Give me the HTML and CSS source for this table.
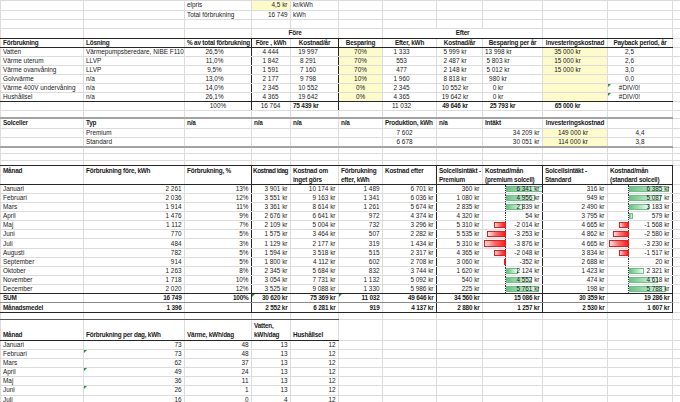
FILE: index.html
```html
<!DOCTYPE html>
<html lang="sv">
<head>
<meta charset="utf-8">
<title>Energikalkyl</title>
<link rel="stylesheet" href="styles.css">
</head>
<body>
<table class="sheet">
<colgroup>
<col class="wa"><col class="wb"><col class="wc"><col class="wd"><col class="we"><col class="wf"><col class="wg"><col class="wh"><col class="wi"><col class="wj"><col class="wk"><col class="wl">
</colgroup>
<tbody>
<tr class="h95"><td></td><td></td><td>elpris</td><td class="y r">4,5 kr</td><td>kr/kWh</td><td></td><td></td><td></td><td></td><td></td><td></td><td></td></tr>
<tr class="h95"><td></td><td></td><td>Total förbrukning</td><td class="r">16 749</td><td>kWh</td><td></td><td></td><td></td><td></td><td></td><td></td><td></td></tr>
<tr class="h9"><td></td><td></td><td></td><td></td><td></td><td></td><td></td><td></td><td></td><td></td><td></td><td></td></tr>
<tr class="h95 bd"><td></td><td></td><td></td><td colspan="2" class="b c">Före</td><td></td><td colspan="3" class="b c">Efter</td><td></td><td></td><td class="nb"></td></tr>
<tr class="h95 bd"><td class="b">Förbrukning</td><td class="b">Lösning</td><td class="b vr">% av total förbrukning</td><td class="b c">Före , kWh</td><td class="b c vr">Kostnad/år</td><td class="b c">Besparing</td><td class="b c">Efter, kWh</td><td class="b c">Kostnad/år</td><td class="b c">Besparing per år</td><td class="b c">Investeringskostnad</td><td class="b c">Payback period, år</td><td class="nb"></td></tr>
<tr class="h9"><td>Vatten</td><td>Värmepumpsberedare, NIBE F110</td><td class="c cC vr">26,5%</td><td class="c cD">4 444</td><td class="c cE vr">19 997</td><td class="y c">70%</td><td class="c cG">1 333</td><td class="c cH">5 999 kr</td><td class="c cI">13 998 kr</td><td class="y c cJ">35 000 kr</td><td class="c cK">2,5</td><td></td></tr>
<tr class="h9"><td>Värme uterum</td><td>LLVP</td><td class="c cC vr">11,0%</td><td class="c cD">1 842</td><td class="c cE vr">8 291</td><td class="y c">70%</td><td class="c cG">553</td><td class="c cH">2 487 kr</td><td class="c cI">5 803 kr</td><td class="y c cJ">15 000 kr</td><td class="c cK">2,6</td><td></td></tr>
<tr class="h9"><td>Värme ovanvåning</td><td>LLVP</td><td class="c cC vr">9,5%</td><td class="c cD">1 591</td><td class="c cE vr">7 160</td><td class="y c">70%</td><td class="c cG">477</td><td class="c cH">2 148 kr</td><td class="c cI">5 012 kr</td><td class="y c cJ">15 000 kr</td><td class="c cK">3,0</td><td></td></tr>
<tr class="h9"><td>Golvvärme</td><td>n/a</td><td class="c cC vr">13,0%</td><td class="c cD">2 177</td><td class="c cE vr">9 798</td><td class="y c">10%</td><td class="c cG">1 960</td><td class="c cH">8 818 kr</td><td class="c cI">980 kr</td><td class="y"></td><td class="c cK">0,0</td><td></td></tr>
<tr class="h9"><td>Värme 400V undervåning</td><td>n/a</td><td class="c cC vr">14,0%</td><td class="c cD">2 345</td><td class="c cE vr">10 552</td><td class="y c">0%</td><td class="c cG">2 345</td><td class="c cH">10 552 kr</td><td class="c cI">0 kr</td><td class="y"></td><td class="c cK tri">#DIV/0!</td><td></td></tr>
<tr class="h9 bd"><td>Hushållsel</td><td>n/a</td><td class="c cC vr">26,1%</td><td class="c cD">4 365</td><td class="c cE vr">19 642</td><td class="y c">0%</td><td class="c cG">4 365</td><td class="c cH">19 642 kr</td><td class="c cI">0 kr</td><td class="y"></td><td class="c cK tri">#DIV/0!</td><td class="nb"></td></tr>
<tr class="h9"><td></td><td></td><td class="c vr">100%</td><td class="c cD">16 764</td><td class="b c cEt vr">75 439 kr</td><td></td><td class="c cG">11 032</td><td class="b c cH">49 646 kr</td><td class="b c cIt">25 793 kr</td><td class="b c cJ">65 000 kr</td><td></td><td></td></tr>
<tr class="h75 bg"><td></td><td></td><td></td><td></td><td></td><td></td><td></td><td></td><td></td><td></td><td></td><td class="nb"></td></tr>
<tr class="h10"><td class="b">Solceller</td><td class="b">Typ</td><td class="b">n/a</td><td class="b">n/a</td><td class="b">n/a</td><td class="b">n/a</td><td class="b">Produktion, kWh</td><td class="b">n/a</td><td class="b">Intäkt</td><td class="b c">Investeringskostnad</td><td></td><td></td></tr>
<tr class="h95"><td></td><td>Premium</td><td></td><td></td><td></td><td></td><td class="c cGs">7 602</td><td></td><td class="r">34 209 kr</td><td class="y c cJs">149 000 kr</td><td class="c">4,4</td><td></td></tr>
<tr class="h9 bg"><td></td><td>Standard</td><td></td><td></td><td></td><td></td><td class="c cGs">6 678</td><td></td><td class="r">30 051 kr</td><td class="y c cJs">114 000 kr</td><td class="c">3,8</td><td class="nb"></td></tr>
<tr class="h65"><td></td><td></td><td></td><td></td><td></td><td></td><td></td><td></td><td></td><td></td><td></td><td></td></tr>
<tr class="h7"><td></td><td></td><td></td><td></td><td></td><td></td><td></td><td></td><td></td><td></td><td></td><td></td></tr>
<tr class="h5 bd"><td></td><td></td><td></td><td></td><td></td><td></td><td></td><td></td><td></td><td></td><td></td><td class="nb"></td></tr>
<tr class="h17 bd hd"><td class="b">Månad</td><td class="b">Förbrukning före, kWh</td><td class="b vr">Förbrukning, %</td><td class="b tight">Kostnad idag</td><td class="b">Kostnad om<br>inget görs</td><td class="b">Förbrukning<br>efter, kWh</td><td class="b vr">Kostnad efter</td><td class="b">Solcellsintäkt -<br>Premium</td><td class="b vr">Kostnad/mån<br>(premium solcell)</td><td class="b">Solcellsintäkt -<br>Standard</td><td class="b vr">Kostnad/mån<br>(standard solcell)</td><td class="nb"></td></tr>
<tr class="hm"><td>Januari</td><td class="r">2 261</td><td class="r vr">13%</td><td class="r">3 901 kr</td><td class="r">10 174 kr</td><td class="r">1 489</td><td class="r vr">6 701 kr</td><td class="r">360 kr</td><td class="r vr bar"><i class="ax p"></i><i class="pos p" style="width:36.8px"></i><span>6 341 kr</span></td><td class="r">316 kr</td><td class="r vr bar"><i class="ax s"></i><i class="pos s" style="width:40.2px"></i><span>6 385 kr</span></td><td></td></tr>
<tr class="hm"><td>Februari</td><td class="r">2 036</td><td class="r vr">12%</td><td class="r">3 551 kr</td><td class="r">9 163 kr</td><td class="r">1 341</td><td class="r vr">6 036 kr</td><td class="r">1 080 kr</td><td class="r vr bar"><i class="ax p"></i><i class="pos p" style="width:28.7px"></i><span>4 956 kr</span></td><td class="r">949 kr</td><td class="r vr bar"><i class="ax s"></i><i class="pos s" style="width:32px"></i><span>5 087 kr</span></td><td></td></tr>
<tr class="hm"><td>Mars</td><td class="r">1 914</td><td class="r vr">11%</td><td class="r">3 361 kr</td><td class="r">8 614 kr</td><td class="r">1 261</td><td class="r vr">5 674 kr</td><td class="r">2 835 kr</td><td class="r vr bar"><i class="ax p"></i><i class="pos p" style="width:16.5px"></i><span>2 839 kr</span></td><td class="r">2 490 kr</td><td class="r vr bar"><i class="ax s"></i><i class="pos s" style="width:20.1px"></i><span>3 183 kr</span></td><td></td></tr>
<tr class="hm"><td>April</td><td class="r">1 476</td><td class="r vr">9%</td><td class="r">2 676 kr</td><td class="r">6 641 kr</td><td class="r">972</td><td class="r vr">4 374 kr</td><td class="r">4 320 kr</td><td class="r vr bar"><i class="ax p"></i><span>54 kr</span></td><td class="r">3 795 kr</td><td class="r vr bar"><i class="ax s"></i><i class="pos s" style="width:3.6px"></i><span>579 kr</span></td><td></td></tr>
<tr class="hm"><td>Maj</td><td class="r">1 112</td><td class="r vr">7%</td><td class="r">2 109 kr</td><td class="r">5 004 kr</td><td class="r">732</td><td class="r vr">3 296 kr</td><td class="r">5 310 kr</td><td class="r vr bar"><i class="ax p"></i><i class="neg p" style="width:11.7px"></i><span>-2 014 kr</span></td><td class="r">4 665 kr</td><td class="r vr bar"><i class="ax s"></i><i class="neg s" style="width:9.9px"></i><span>-1 568 kr</span></td><td></td></tr>
<tr class="hm"><td>Juni</td><td class="r">770</td><td class="r vr">5%</td><td class="r">1 575 kr</td><td class="r">3 464 kr</td><td class="r">507</td><td class="r vr">2 282 kr</td><td class="r">5 535 kr</td><td class="r vr bar"><i class="ax p"></i><i class="neg p" style="width:18.9px"></i><span>-3 253 kr</span></td><td class="r">4 862 kr</td><td class="r vr bar"><i class="ax s"></i><i class="neg s" style="width:16.3px"></i><span>-2 580 kr</span></td><td></td></tr>
<tr class="hm"><td>Juli</td><td class="r">484</td><td class="r vr">3%</td><td class="r">1 129 kr</td><td class="r">2 177 kr</td><td class="r">319</td><td class="r vr">1 434 kr</td><td class="r">5 310 kr</td><td class="r vr bar"><i class="ax p"></i><i class="neg p" style="width:22.5px"></i><span>-3 876 kr</span></td><td class="r">4 665 kr</td><td class="r vr bar"><i class="ax s"></i><i class="neg s" style="width:20.3px"></i><span>-3 230 kr</span></td><td></td></tr>
<tr class="hm"><td>Augusti</td><td class="r">782</td><td class="r vr">5%</td><td class="r">1 594 kr</td><td class="r">3 518 kr</td><td class="r">515</td><td class="r vr">2 317 kr</td><td class="r">4 365 kr</td><td class="r vr bar"><i class="ax p"></i><i class="neg p" style="width:11.9px"></i><span>-2 048 kr</span></td><td class="r">3 834 kr</td><td class="r vr bar"><i class="ax s"></i><i class="neg s" style="width:9.6px"></i><span>-1 517 kr</span></td><td></td></tr>
<tr class="hm"><td>September</td><td class="r">914</td><td class="r vr">5%</td><td class="r">1 800 kr</td><td class="r">4 112 kr</td><td class="r">602</td><td class="r vr">2 708 kr</td><td class="r">3 060 kr</td><td class="r vr bar"><i class="ax p"></i><i class="neg p" style="width:2px"></i><span>-352 kr</span></td><td class="r">2 688 kr</td><td class="r vr bar"><i class="ax s"></i><span>20 kr</span></td><td></td></tr>
<tr class="hm"><td>Oktober</td><td class="r">1 263</td><td class="r vr">8%</td><td class="r">2 345 kr</td><td class="r">5 684 kr</td><td class="r">832</td><td class="r vr">3 744 kr</td><td class="r">1 620 kr</td><td class="r vr bar"><i class="ax p"></i><i class="pos p" style="width:12.3px"></i><span>2 124 kr</span></td><td class="r">1 423 kr</td><td class="r vr bar"><i class="ax s"></i><i class="pos s" style="width:14.6px"></i><span>2 321 kr</span></td><td></td></tr>
<tr class="hm"><td>November</td><td class="r">1 718</td><td class="r vr">10%</td><td class="r">3 054 kr</td><td class="r">7 731 kr</td><td class="r">1 132</td><td class="r vr">5 092 kr</td><td class="r">540 kr</td><td class="r vr bar"><i class="ax p"></i><i class="pos p" style="width:26.4px"></i><span>4 552 kr</span></td><td class="r">474 kr</td><td class="r vr bar"><i class="ax s"></i><i class="pos s" style="width:29.1px"></i><span>4 618 kr</span></td><td></td></tr>
<tr class="hm bd"><td>December</td><td class="r">2 020</td><td class="r vr">12%</td><td class="r">3 525 kr</td><td class="r">9 088 kr</td><td class="r">1 330</td><td class="r vr">5 986 kr</td><td class="r">225 kr</td><td class="r vr bar"><i class="ax p"></i><i class="pos p" style="width:33.4px"></i><span>5 761 kr</span></td><td class="r">198 kr</td><td class="r vr bar"><i class="ax s"></i><i class="pos s" style="width:36.5px"></i><span>5 788 kr</span></td><td class="nb"></td></tr>
<tr class="h9 bm b"><td>SUM</td><td class="r">16 749</td><td class="r vr">100%</td><td class="r tri">30 620 kr</td><td class="r">75 369 kr</td><td class="r tri">11 032</td><td class="r vr">49 646 kr</td><td class="r">34 560 kr</td><td class="r vr">15 086 kr</td><td class="r">30 359 kr</td><td class="r vr">19 286 kr</td><td class="nb"></td></tr>
<tr class="h105 bd b"><td>Månadsmedel</td><td class="r">1 396</td><td class="r vr"></td><td class="r">2 552 kr</td><td class="r">6 281 kr</td><td class="r">919</td><td class="r vr">4 137 kr</td><td class="r">2 880 kr</td><td class="r vr">1 257 kr</td><td class="r">2 530 kr</td><td class="r vr">1 607 kr</td><td class="nb"></td></tr>
<tr class="h65"><td class="bh"></td><td class="bh"></td><td class="bh"></td><td class="bh"></td><td class="bh"></td><td></td><td></td><td></td><td></td><td></td><td></td><td></td></tr>
<tr class="h21 hb b"><td class="bk">Månad</td><td class="bk">Förbrukning per dag, kWh</td><td class="bk">Värme, kWh/dag</td><td class="bk">Vatten,<br>kWh/dag</td><td class="bk">Hushållsel</td><td></td><td></td><td></td><td></td><td></td><td></td><td></td></tr>
<tr class="h91"><td>Januari</td><td class="r">73</td><td class="r">48</td><td class="r">13</td><td class="r">12</td><td></td><td></td><td></td><td></td><td></td><td></td><td></td></tr>
<tr class="h91"><td>Februari</td><td class="r tri">73</td><td class="r">48</td><td class="r">13</td><td class="r">12</td><td></td><td></td><td></td><td></td><td></td><td></td><td></td></tr>
<tr class="h91"><td>Mars</td><td class="r">62</td><td class="r">37</td><td class="r">13</td><td class="r">12</td><td></td><td></td><td></td><td></td><td></td><td></td><td></td></tr>
<tr class="h91"><td>April</td><td class="r tri">49</td><td class="r">24</td><td class="r">13</td><td class="r">12</td><td></td><td></td><td></td><td></td><td></td><td></td><td></td></tr>
<tr class="h91"><td>Maj</td><td class="r">36</td><td class="r">11</td><td class="r">13</td><td class="r">12</td><td></td><td></td><td></td><td></td><td></td><td></td><td></td></tr>
<tr class="h91"><td>Juni</td><td class="r tri">26</td><td class="r">1</td><td class="r">13</td><td class="r">12</td><td></td><td></td><td></td><td></td><td></td><td></td><td></td></tr>
<tr class="h91"><td>Juli</td><td class="r">16</td><td class="r">0</td><td class="r">4</td><td class="r">12</td><td></td><td></td><td></td><td></td><td></td><td></td><td></td></tr>
</tbody>
</table>
</body>
</html>
```

FILE: styles.css
```css
html, body {
  margin: 0;
  padding: 0;
  background: #ffffff;
}
body {
  font-family: "Liberation Sans", Arial, sans-serif;
  font-size: 6.4px;
  color: #1a1a1a;
  overflow: hidden;
}
.sheet {
  border-collapse: collapse;
  table-layout: fixed;
  width: 680px;
}
.wa { width: 83px; }
.wb { width: 101px; }
.wc { width: 67px; }
.wd { width: 39px; }
.we { width: 48px; }
.wf { width: 44px; }
.wg { width: 54px; }
.wh { width: 46px; }
.wi { width: 60px; }
.wj { width: 65px; }
.wk { width: 65px; }
.wl { width: 8px; }

.sheet td {
  border: 1px solid #dcdcdc;
  padding: 0 2px;
  line-height: 8px;
  white-space: nowrap;
  overflow: hidden;
  vertical-align: middle;
  text-align: left;
}

/* row heights */
.h5 { height: 5px; }
.h65 { height: 6.5px; }
.h7 { height: 7px; }
.h75 { height: 7.5px; }
.h9 { height: 9px; }
.h95 { height: 9.5px; }
.h10 { height: 10px; }
.h105 { height: 10.5px; }
.h17 { height: 17px; }
.h21 { height: 21px; }
.hm { height: 9.08px; }
.h91 { height: 9.1px; }

/* borders */
.bd td { border-bottom: 1px solid #262626; }
.bd td.nb { border-bottom-color: #dcdcdc; }
.bg td { border-bottom: 2px solid #a3a3a3; }
.bg td.nb { border-bottom: 1px solid #dcdcdc; }
.bm td { border-bottom: 1px solid #8a8a8a; }
.bm td.nb { border-bottom-color: #dcdcdc; }
.sheet td.vr { border-right: 1px solid #262626; }
.sheet td.bh { border-bottom: 1px solid #555555; }
.sheet td.bk { border-bottom: 1px solid #262626; }

/* header rows */
.hd td { vertical-align: top; padding-top: 1px; line-height: 8.5px; }
.hb td { vertical-align: bottom; line-height: 9.5px; }

/* text */
.b, .b td { font-weight: bold; letter-spacing: -0.2px; }
.sheet td.tight { letter-spacing: -0.45px; padding-left: 1px; padding-right: 0; }
.c { text-align: center !important; }
.r { text-align: right !important; padding-right: 2.5px !important; }
.y { background: #fdfbc9; }

/* centred value offsets (number formats with trailing space) */
.cC { padding-right: 9px !important; }
.cD { padding-right: 3px !important; }
.cE { padding-right: 15px !important; }
.cEt { padding-right: 22px !important; }
.cG { padding-right: 18px !important; }
.cGs { padding-right: 12px !important; }
.cH { padding-right: 11px !important; }
.cI { padding-right: 31px !important; }
.cIt { padding-right: 22px !important; }
.cJ { padding-right: 17px !important; }
.cJs { padding-right: 6px !important; }
.cK { padding-right: 23px !important; }

/* error indicator */
.tri { position: relative; }
.tri::before {
  content: "";
  position: absolute;
  left: 0;
  top: 0;
  border-top: 3px solid #1f8f3c;
  border-right: 3px solid transparent;
}

/* data bars */
.bar { position: relative; }
.bar span { position: relative; }
.bar i { position: absolute; display: block; }
.ax { top: 0; bottom: 0; width: 0; border-left: 1px dotted #333333; }
.ax.p { left: 22px; }
.ax.s { left: 20px; }
.pos {
  top: 1px;
  bottom: 1px;
  box-sizing: border-box;
  border: 1px solid #6cc285;
  background: linear-gradient(90deg, #6cc285 0%, #b2e0bf 55%, #f3faf5 100%);
}
.pos.p { left: 23px; }
.pos.s { left: 21px; }
.neg {
  top: 1px;
  bottom: 1px;
  box-sizing: border-box;
  border: 1px solid #f01818;
  background: linear-gradient(270deg, #ff1a1a 0%, #ff7070 55%, #ffe6e6 100%);
}
.neg.p { right: 36px; }
.neg.s { right: 43px; }
```
